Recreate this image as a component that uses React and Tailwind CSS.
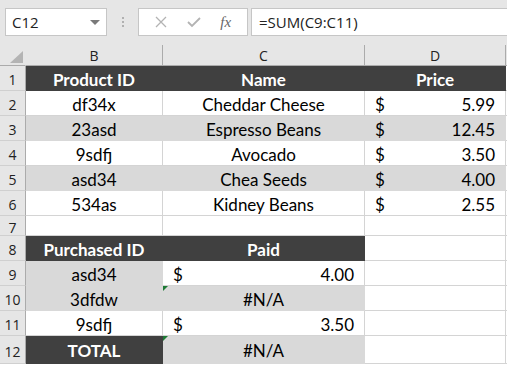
import React from 'react';

const cellFont = { fontFamily: 'Lato, "Open Sans", sans-serif' };

// row definitions: height and cells for B, C, D
const rows = [
  { n: 1, h: 'h-[25px]', cells: [
    { fill: 'dark', text: 'Product ID', bold: true },
    { fill: 'dark', text: 'Name', bold: true },
    { fill: 'dark', text: 'Price', bold: true },
  ] },
  { n: 2, h: 'h-[25px]', cells: [
    { fill: 'none', text: 'df34x' },
    { fill: 'none', text: 'Cheddar Cheese' },
    { fill: 'none', money: '5.99' },
  ] },
  { n: 3, h: 'h-[25px]', cells: [
    { fill: 'gray', text: '23asd' },
    { fill: 'gray', text: 'Espresso Beans' },
    { fill: 'gray', money: '12.45' },
  ] },
  { n: 4, h: 'h-[25px]', cells: [
    { fill: 'none', text: '9sdfj' },
    { fill: 'none', text: 'Avocado' },
    { fill: 'none', money: '3.50' },
  ] },
  { n: 5, h: 'h-[25px]', cells: [
    { fill: 'gray', text: 'asd34' },
    { fill: 'gray', text: 'Chea Seeds' },
    { fill: 'gray', money: '4.00' },
  ] },
  { n: 6, h: 'h-[25px]', cells: [
    { fill: 'none', text: '534as' },
    { fill: 'none', text: 'Kidney Beans' },
    { fill: 'none', money: '2.55' },
  ] },
  { n: 7, h: 'h-[20px]', cells: [
    { fill: 'none' },
    { fill: 'none' },
    { fill: 'none' },
  ] },
  { n: 8, h: 'h-[25px]', cells: [
    { fill: 'dark', text: 'Purchased ID', bold: true },
    { fill: 'dark', text: 'Paid', bold: true },
    { fill: 'none' },
  ] },
  { n: 9, h: 'h-[25px]', cells: [
    { fill: 'gray', text: 'asd34' },
    { fill: 'none', money: '4.00' },
    { fill: 'none' },
  ] },
  { n: 10, h: 'h-[25px]', cells: [
    { fill: 'gray', text: '3dfdw' },
    { fill: 'gray', text: '#N/A', flag: true },
    { fill: 'none' },
  ] },
  { n: 11, h: 'h-[25px]', cells: [
    { fill: 'none', text: '9sdfj' },
    { fill: 'none', money: '3.50' },
    { fill: 'none' },
  ] },
  { n: 12, h: 'h-[28px]', cells: [
    { fill: 'dark', text: 'TOTAL', bold: true },
    { fill: 'gray', text: '#N/A', flag: true },
    { fill: 'none' },
  ] },
];

function Cell({ cell }) {
  const fillClass =
    cell.fill === 'dark'
      ? 'bg-[#404040] border-[#404040] text-white'
      : cell.fill === 'gray'
      ? 'bg-[#d9d9d9] border-[#d9d9d9] text-black'
      : 'bg-white border-[#d4d4d4] text-black';

  return (
    <div
      className={`relative flex items-center border-r border-b text-[17px] leading-none ${fillClass}`}
      style={cellFont}
    >
      {cell.flag && (
        <span className="absolute left-0 top-0 h-0 w-0 border-t-[5px] border-r-[5px] border-t-[#1d7a35] border-r-transparent" />
      )}
      {cell.money ? (
        <div className="flex w-full justify-between px-[10px] pt-[2px]">
          <span>$</span>
          <span>{cell.money}</span>
        </div>
      ) : (
        <div className={`w-full text-center pt-[2px] ${cell.bold ? 'font-bold' : ''}`}>
          {cell.text}
        </div>
      )}
    </div>
  );
}

function FormulaBar() {
  return (
    <div className="flex h-[45px] items-start gap-0 bg-[#e6e6e6] pt-[8px] pl-[5px]">
      <div className="flex h-[28px] w-[102px] items-center justify-between border border-[#c6c6c6] bg-white pl-[6px] pr-[6px]">
        <span className="text-[15px] text-[#222]" style={{ fontFamily: '"Open Sans", sans-serif' }}>
          C12
        </span>
        <span className="h-0 w-0 border-l-[5px] border-r-[5px] border-t-[5px] border-l-transparent border-r-transparent border-t-[#7a7a7a]" />
      </div>
      <div className="flex h-[28px] w-[31px] flex-col items-center justify-center gap-[2px]">
        <span className="h-[2px] w-[2px] bg-[#b0b0b0]" />
        <span className="h-[2px] w-[2px] bg-[#b0b0b0]" />
        <span className="h-[2px] w-[2px] bg-[#b0b0b0]" />
      </div>
      <div className="flex h-[28px] w-[110px] items-center justify-around border border-[#c6c6c6] bg-white px-[6px]">
        <svg width="12" height="12" viewBox="0 0 12 12">
          <path d="M1 1 L11 11 M11 1 L1 11" stroke="#b3b3b3" strokeWidth="1.3" fill="none" />
        </svg>
        <svg width="14" height="12" viewBox="0 0 14 12">
          <path d="M1 6 L5 10 L13 2" stroke="#b3b3b3" strokeWidth="1.8" fill="none" />
        </svg>
        <span
          className="text-[15px] italic text-[#666]"
          style={{ fontFamily: '"Liberation Serif", serif' }}
        >
          fx
        </span>
      </div>
      <div className="ml-[3px] flex h-[28px] flex-1 items-center border border-r-0 border-[#c6c6c6] bg-white pl-[7px]">
        <span className="text-[15px] text-[#222]" style={{ fontFamily: '"Open Sans", sans-serif' }}>
          =SUM(C9:C11)
        </span>
      </div>
    </div>
  );
}

export default function App() {
  const headFont = { fontFamily: '"Open Sans", sans-serif' };
  return (
    <div className="h-[366px] w-[507px] overflow-hidden bg-white">
      <FormulaBar />
      <div className="grid grid-cols-[26px_137px_202px_141px_1fr]">
        {/* column header row */}
        <div className="relative h-[21px] border-r border-b border-r-[#e6e6e6] border-b-[#ababab] bg-[#e6e6e6]">
          <span className="absolute right-[2px] bottom-[2px] h-0 w-0 border-b-[12px] border-l-[13px] border-b-[#b4b4b4] border-l-transparent" />
        </div>
        {['B', 'C', 'D'].map((c) => (
          <div
            key={c}
            className="flex h-[21px] items-center justify-center border-r border-b border-r-[#ababab] border-b-[#ababab] bg-[#e6e6e6] text-[14px] text-[#222]"
            style={headFont}
          >
            {c}
          </div>
        ))}
        <div className="h-[21px] border-b border-b-[#ababab] bg-[#e6e6e6]" />

        {rows.map((r) => (
          <React.Fragment key={r.n}>
            <div
              className={`flex items-center justify-center border-r border-b border-r-[#ababab] border-b-[#d0d0d0] bg-[#e6e6e6] pt-[3px] text-[14px] text-[#222] ${r.h}`}
              style={headFont}
            >
              {r.n}
            </div>
            {r.cells.map((c, i) => (
              <Cell key={i} cell={c} />
            ))}
            <div className="border-b border-[#d4d4d4] bg-white" />
          </React.Fragment>
        ))}
      </div>
    </div>
  );
}
